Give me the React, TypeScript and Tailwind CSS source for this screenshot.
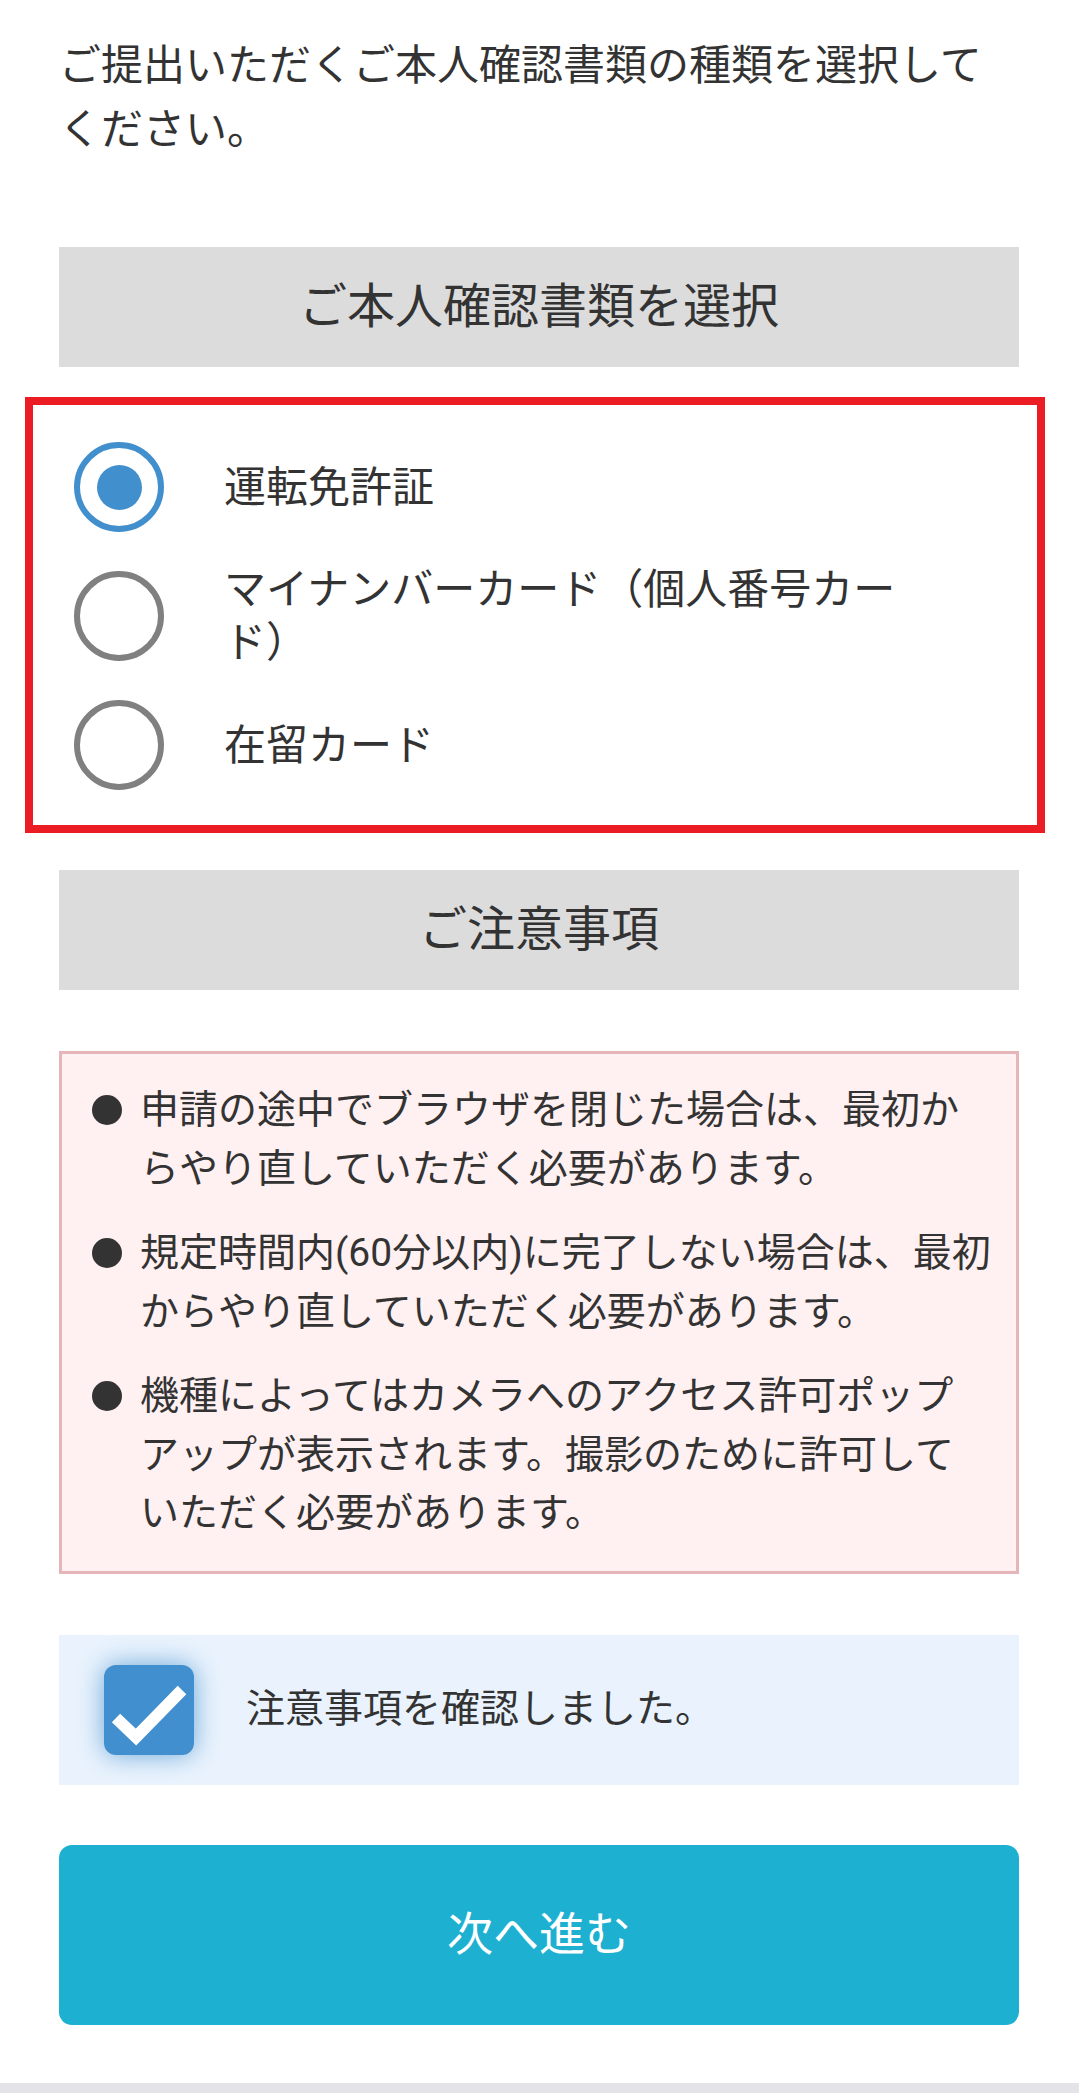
const radioOptions = [
  { label: "運転免許証", checked: true },
  { label: "マイナンバーカード（個人番号カード）", checked: false },
  { label: "在留カード", checked: false },
];

// each entry is split where the original wraps when the widths differ
const notes = [
  ["申請の途中でブラウザを閉じた場合は、最初からやり直していただく必要があります。"],
  ["規定時間内(60分以内)に完了しない場合は、最初からやり直していただく必要があります。"],
  ["機種によってはカメラへのアクセス許可ポップ", "アップが表示されます。撮影のために許可して", "いただく必要があります。"],
];

function Radio({ checked }: { checked: boolean }) {
  return (
    <div
      className={`flex h-[90px] w-[90px] shrink-0 items-center justify-center rounded-full border-[6px] ${
        checked ? "border-[#428fcd]" : "border-[#808080]"
      }`}
    >
      {checked && <div className="h-[45px] w-[45px] rounded-full bg-[#428fcd]" />}
    </div>
  );
}

function SectionTitle({ children }: { children: React.ReactNode }) {
  return (
    <div className="flex h-[120px] items-center justify-center bg-[#dcdcdc] text-[48px] text-[#333]">
      {children}
    </div>
  );
}

export default function App() {
  return (
    <div className="min-h-[2093px] w-[1079px] bg-white font-['Roboto','Noto_Sans_CJK_JP',sans-serif] text-[#333]">
      <div className="pl-[59px] pr-[60px] pt-[34px]">
        <p className="text-[42px] leading-[64px]">
          ご提出いただくご本人確認書類の種類を選択してください。
        </p>

        <div className="mt-[85px]">
          <SectionTitle>ご本人確認書類を選択</SectionTitle>
        </div>

        {/* choices */}
        <div className="-ml-[34px] -mr-[26px] mt-[30px] flex flex-col gap-[31px] border-[8px] border-[#ec1c24] pb-[35px] pl-[41px] pt-[37px]">
          {radioOptions.map((opt) => (
            <label key={opt.label} className="flex items-center gap-[60px]">
              <Radio checked={opt.checked} />
              <span className="max-w-[700px] text-[42px] leading-[53px]">{opt.label}</span>
            </label>
          ))}
        </div>

        <div className="mt-[37px]">
          <SectionTitle>ご注意事項</SectionTitle>
        </div>

        <ul className="mt-[61px] flex flex-col gap-[26px] border-[3px] border-[#e6b5b9] bg-[#fff0f1] pb-[28px] pl-[30px] pr-[22px] pt-[27px] text-[39px] leading-[58.5px]">
          {notes.map((lines, i) => (
            <li key={i} className="flex items-start gap-[18px]">
              <span className="mt-[14px] h-[30px] w-[30px] shrink-0 rounded-full bg-[#333]" />
              <span>
                {lines.map((l, j) => (
                  <span key={j}>
                    {j > 0 && <br />}
                    {l}
                  </span>
                ))}
              </span>
            </li>
          ))}
        </ul>

        <div className="mt-[61px] flex h-[150px] items-center gap-[52px] bg-[#eaf3fd] pl-[45px]">
          <div className="flex h-[90px] w-[90px] items-center justify-center rounded-[12px] bg-[#428fcf] shadow-[0_0_26px_rgba(66,143,207,0.75)]">
            <svg width="90" height="90" viewBox="0 0 90 90">
              <polyline
                points="12,53 32,72 78,25"
                fill="none"
                stroke="white"
                strokeWidth="12"
              />
            </svg>
          </div>
          <span className="text-[39px]">注意事項を確認しました。</span>
        </div>

        <button className="mt-[60px] flex h-[180px] w-full items-center justify-center rounded-[13px] bg-[#1eb0d1] text-[46px] text-white">
          次へ進む
        </button>
      </div>
      <div className="mt-[58px] h-[10px] bg-[#e4e4e8]" />
    </div>
  );
}
